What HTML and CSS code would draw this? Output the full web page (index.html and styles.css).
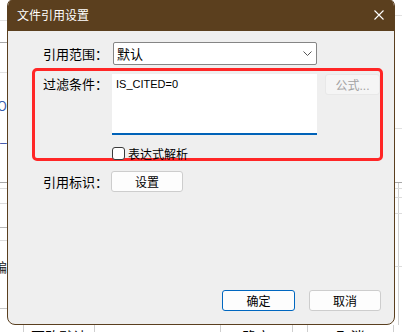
FILE: index.html
```html
<!DOCTYPE html>
<html lang="zh-CN">

<head>
    <meta charset="UTF-8">
    <title>文件引用设置</title>
    <link rel="stylesheet" href="styles.css">
</head>

<body>

    <div class="desk">
        <!-- 背后的主窗口（被对话框遮住） -->
        <div class="app">
            <div class="strip strip-left">
                <span class="peek peek-o">(O</span>
                <span class="peek peek-m">NUM_</span>
                <span class="peek peek-b">编</span>
            </div>
            <div class="strip strip-right"></div>
        </div>
        <div class="app-foot">
            <span class="ghost g1">更改默认</span>
            <span class="ghost g2">确定</span>
            <span class="ghost g3">取消</span>
        </div>

        <!-- 对话框 -->
        <div class="dialog">
            <div class="titlebar">
                <span class="title">文件引用设置</span>
                <svg class="close" width="10" height="10" viewBox="0 0 10 10">
                    <path d="M0.5 0.5 L9.5 9.5 M9.5 0.5 L0.5 9.5" stroke="#fff" stroke-width="1.1" fill="none" />
                </svg>
            </div>

            <div class="dlg-body">
                <div class="row row-scope">
                    <span class="lbl">引用范围：</span>
                    <div class="combo">
                        <span>默认</span>
                        <svg class="chev" width="9" height="5" viewBox="0 0 9 5">
                            <path d="M0.5 0.5 L4.5 4.5 L8.5 0.5" stroke="#555" stroke-width="1" fill="none" />
                        </svg>
                    </div>
                </div>

                <!-- 红框标注 -->
                <div class="mark">
                    <div class="row row-filter">
                        <span class="lbl">过滤条件：</span>
                        <div class="edit">IS_CITED=0</div>
                        <button class="btn btn-off">公式<span class="dots">...</span></button>
                    </div>
                    <div class="row row-check">
                        <span class="chk"></span>
                        <span class="chk-text">表达式解析</span>
                    </div>
                </div>

                <div class="row row-ident">
                    <span class="lbl lbl-short">引用标识：</span>
                    <button class="btn btn-set">设置</button>
                </div>

                <div class="foot">
                    <button class="btn btn-ok">确定</button>
                    <button class="btn btn-cancel">取消</button>
                </div>
            </div>
        </div>
    </div>

</body>

</html>
```

FILE: styles.css
```css
html,
body {
    margin: 0;
    height: 100%;
    font-family: "Noto Sans CJK SC", "Noto Sans", sans-serif;
}

/* 整个画面 */
.desk {
    position: relative;
    width: 402px;
    height: 332px;
    overflow: hidden;
    background: #fff;
    display: flex;
    flex-direction: column;
}

/* 背后窗口 */
.app {
    height: 325px;
    flex: none;
    display: flex;
    justify-content: space-between;
}

.strip {
    width: 7px;
    height: 100%;
    position: relative;
}

.strip-left {
    display: flex;
    flex-direction: column;
    align-items: flex-end;
    background:
        linear-gradient(#e2e2e2, #e2e2e2) 0 20px / 100% 1px no-repeat,
        linear-gradient(#a8a8a8, #a8a8a8) 0 42px / 100% 1px no-repeat,
        linear-gradient(#e2e2e2, #e2e2e2) 0 72px / 100% 1px no-repeat,
        linear-gradient(#a8a8a8, #a8a8a8) 0 182px / 100% 1px no-repeat,
        linear-gradient(#dcdcdc, #dcdcdc) 0 188px / 100% 1px no-repeat,
        linear-gradient(#dcdcdc, #dcdcdc) 0 203px / 100% 1px no-repeat,
        linear-gradient(#b8b8b8, #b8b8b8) 0 227px / 100% 1px no-repeat,
        linear-gradient(#dcdcdc, #dcdcdc) 0 240px / 100% 1px no-repeat,
        linear-gradient(#c8c8c8, #c8c8c8) 0 308px / 100% 1px no-repeat;
}

.strip-right {
    background:
        linear-gradient(#e2e2e2, #e2e2e2) 0 15px / 100% 1px no-repeat,
        linear-gradient(#e2e2e2, #e2e2e2) 0 128px / 100% 1px no-repeat,
        linear-gradient(#a8a8a8, #a8a8a8) 0 182px / 100% 1px no-repeat,
        linear-gradient(#dcdcdc, #dcdcdc) 0 188px / 100% 1px no-repeat,
        linear-gradient(#dcdcdc, #dcdcdc) 0 197px / 100% 1px no-repeat,
        linear-gradient(#dcdcdc, #dcdcdc) 0 213px / 100% 1px no-repeat,
        linear-gradient(#dcdcdc, #dcdcdc) 0 266px / 100% 1px no-repeat,
        linear-gradient(#d0d0d0, #d0d0d0) 3px 182px / 1px 100% no-repeat;
}

.peek {
    white-space: nowrap;
    font-size: 13px;
    line-height: 14px;
}

.peek-o {
    margin-top: 99px;
    color: #3a5fb0;
}

.peek-m {
    margin-top: 17px;
    color: #1f3fa0;
}

.peek-b {
    margin-top: 116px;
    color: #222;
}

.app-foot {
    height: 7px;
    display: flex;
    overflow: hidden;
}

.ghost {
    box-sizing: border-box;
    border-left: 1px solid #cfcfcf;
    border-right: 1px solid #cfcfcf;
    text-align: center;
    font-size: 14px;
    line-height: 20px;
    padding-top: 1px;
    color: #000;
}

.g1 {
    margin-left: 23px;
    width: 72px;
}

.g2 {
    margin-left: 125px;
    width: 73px;
}

.g3 {
    margin-left: 14px;
    width: 87px;
}

/* 对话框 */
.dialog {
    position: absolute;
    left: 7px;
    top: -2px;
    width: 388px;
    height: 327px;
    box-sizing: border-box;
    border: 1px solid #5a3f1f;
    border-radius: 8px;
    overflow: hidden;
    background: #efefef;
    display: flex;
    flex-direction: column;
}

.titlebar {
    height: 32px;
    flex: none;
    background: #5b3f1e;
    display: flex;
    align-items: center;
    padding: 0 10px 0 9px;
}

.title {
    color: #fff;
    font-size: 12px;
    line-height: 16px;
}

.close {
    margin-left: auto;
    margin-top: -1px;
}

.dlg-body {
    flex: 1;
    display: flex;
    flex-direction: column;
    padding: 11px 13px 13px 35px;
}

.row {
    display: flex;
}

.lbl {
    width: 69px;
    flex: none;
    font-size: 13px;
    color: #000;
}

.lbl-short {
    width: 68px;
}

.row-scope {
    height: 23px;
    align-items: center;
}

.combo {
    width: 204px;
    height: 23px;
    margin-left: 1px;
    box-sizing: border-box;
    border: 1px solid #858585;
    border-radius: 2px;
    background: #fff;
    display: flex;
    align-items: center;
    padding: 0 4px 0 3px;
    font-size: 13px;
}

.chev {
    margin-left: auto;
}

/* 红框 */
.mark {
    margin: 3px 0 0 -11px;
    width: 351px;
    height: 93px;
    box-sizing: border-box;
    border: 3px solid #ff2626;
    border-radius: 5px;
    padding: 3px 0 0 8px;
}

.row-filter {
    align-items: flex-start;
}

.row-filter .lbl {
    padding-top: 1px;
    line-height: 18px;
}

.edit {
    width: 205px;
    height: 61px;
    box-sizing: border-box;
    background: #fff;
    border-bottom: 2px solid #0062b8;
    padding: 3px 4px;
    font-family: "Liberation Sans", Arial, sans-serif;
    font-size: 11px;
    line-height: 14px;
}

.btn {
    box-sizing: border-box;
    height: 21px;
    padding: 0;
    border: 1px solid #cdcdcd;
    border-radius: 3px;
    background: #fdfdfd;
    font-family: "Noto Sans CJK SC", sans-serif;
    font-size: 12px;
    color: #000;
}

.btn-off {
    width: 55px;
    margin-left: 8px;
    border-color: #e8e8e8;
    background: #f5f5f5;
    color: #a2a2a2;
}

.dots {
    font-family: "Liberation Sans", Arial, sans-serif;
}

.row-check {
    margin-top: 12px;
    height: 11px;
    padding-left: 69px;
    align-items: flex-start;
}

.chk {
    width: 13px;
    height: 13px;
    box-sizing: border-box;
    border: 1px solid #3a3a3a;
    border-radius: 3px;
    background: #fff;
    flex: none;
}

.chk-text {
    margin-left: 3px;
    margin-top: -2px;
    font-size: 12px;
    line-height: 17px;
}

.row-ident {
    margin-top: 10px;
    align-items: center;
}

.btn-set {
    width: 72px;
}

.foot {
    margin-top: auto;
    display: flex;
    justify-content: flex-end;
    gap: 14px;
}

.btn-ok {
    width: 73px;
    border-color: #0067c0;
}

.btn-cancel {
    width: 72px;
}
```
